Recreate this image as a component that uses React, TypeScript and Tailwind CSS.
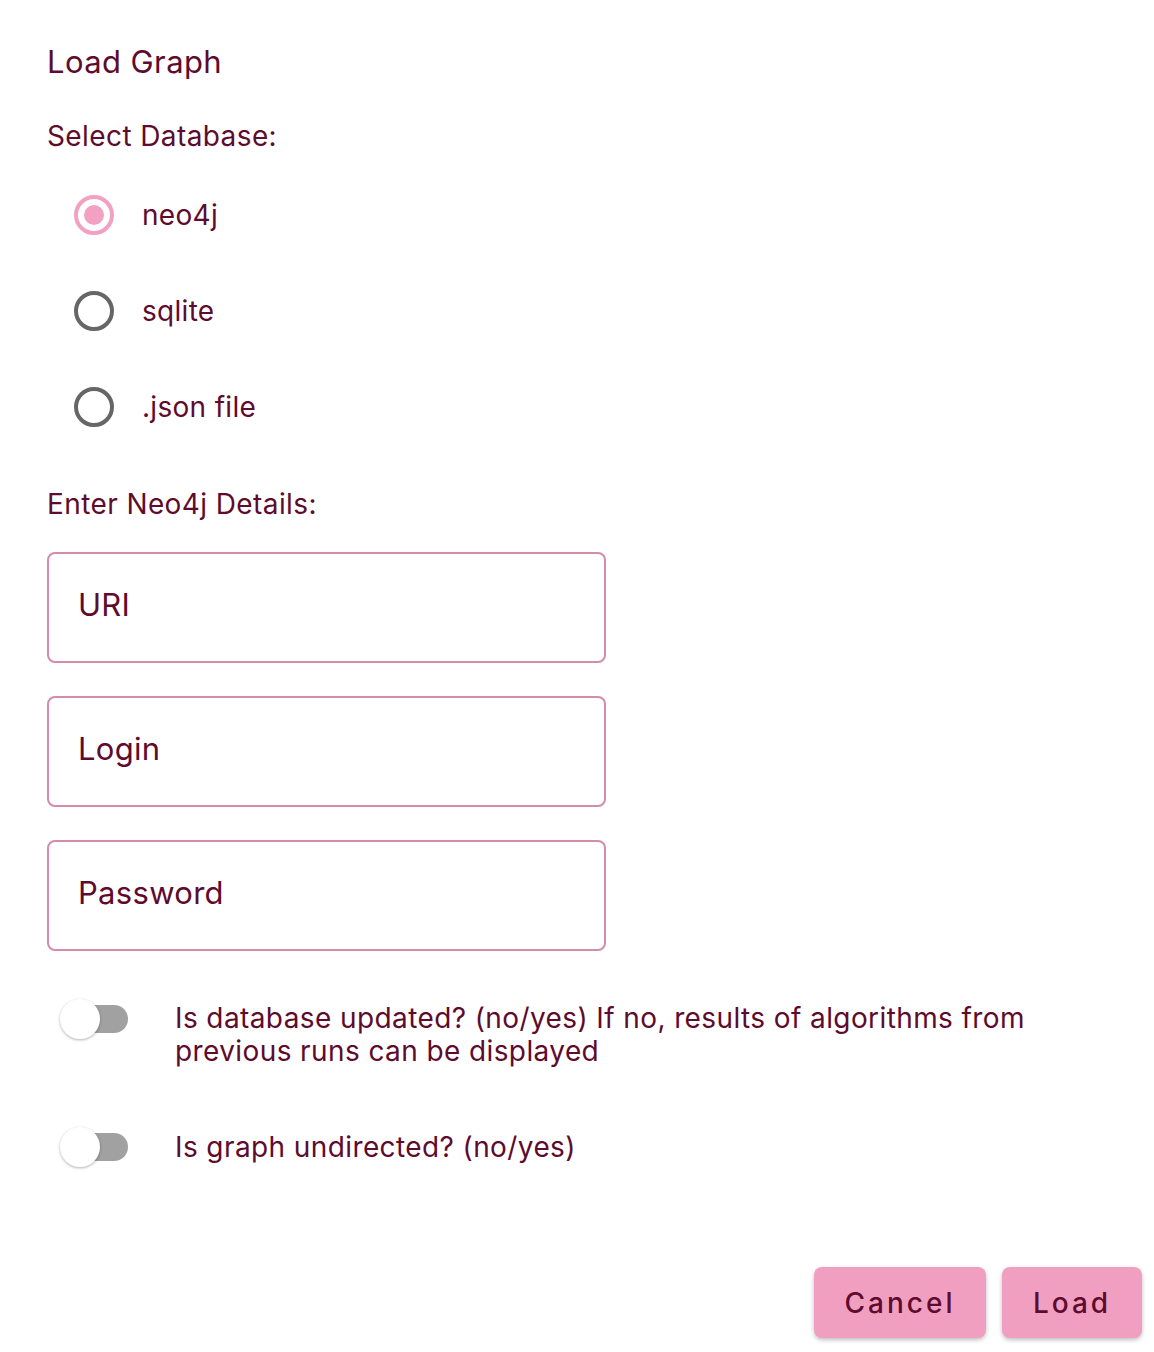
import React, { useState } from 'react';

const ink = 'text-[#5e0b2d]';

const Radio: React.FC<{ checked: boolean; label: string; onClick: () => void }> = ({ checked, label, onClick }) => (
  <button onClick={onClick} className="flex items-center h-[96px] text-left">
    <span className="ml-[27px] w-[40px] h-[40px] flex">
      {checked ? (
        <span className="w-[40px] h-[40px] rounded-full border-[4px] border-[#f3a1c2] flex items-center justify-center">
          <span className="w-[20px] h-[20px] rounded-full bg-[#f3a1c2]" />
        </span>
      ) : (
        <span className="w-[40px] h-[40px] rounded-full border-[4px] border-[#666666]" />
      )}
    </span>
    <span className={`ml-[28px] text-[28px] tracking-[0.3px] ${ink}`}>{label}</span>
  </button>
);

const Field: React.FC<{ label: string }> = ({ label }) => (
  <div className="w-[559px] h-[111px] rounded-[8px] border-2 border-[#d58bab] flex items-center pl-[29px] pb-[5px]">
    <span className={`text-[31px] tracking-[0.3px] ${ink}`}>{label}</span>
  </div>
);

const Toggle: React.FC<{ on: boolean; onClick: () => void }> = ({ on, onClick }) => (
  <button onClick={onClick} className="relative w-[128px] h-[40px] shrink-0">
    <span className="absolute left-[62px] top-[6px] w-[66px] h-[28px] rounded-full bg-[#a1a1a1]" />
    <span
      className={`absolute top-0 w-[40px] h-[40px] rounded-full bg-white shadow-[0_1px_3px_rgba(0,0,0,0.3)] ${on ? 'left-[88px]' : 'left-[60px]'}`}
    />
  </button>
);

export default function App() {
  const [db, setDb] = useState('neo4j');
  const [updated, setUpdated] = useState(false);
  const [undirected, setUndirected] = useState(false);

  return (
    <div className="w-[1154px] h-[1352px] bg-white font-['Inter',sans-serif] flex flex-col">
      <div className="pl-[47px] flex flex-col">
        <h1 className={`mt-[42px] text-[31px] leading-[40px] tracking-[0.4px] ${ink}`}>Load Graph</h1>

        <div className={`mt-[38px] text-[28px] leading-[32px] tracking-[0.4px] ${ink}`}>Select Database:</div>

        <div className="mt-[15px] flex flex-col">
          {['neo4j', 'sqlite', '.json file'].map((d) => (
            <Radio key={d} label={d} checked={db === d} onClick={() => setDb(d)} />
          ))}
        </div>

        <div className={`mt-[33px] text-[28px] leading-[32px] tracking-[0.4px] ${ink}`}>Enter Neo4j Details:</div>

        <div className="mt-[32px] flex flex-col gap-[33px]">
          <Field label="URI" />
          <Field label="Login" />
          <Field label="Password" />
        </div>
      </div>

      <div className="mt-[48px] flex flex-col">
        <div className="flex items-start">
          <Toggle on={updated} onClick={() => setUpdated(!updated)} />
          <p className={`ml-[47px] mt-[3px] w-[900px] text-[28px] leading-[33px] tracking-[0.4px] ${ink}`}>
            Is database updated? (no/yes) If no, results of algorithms from previous runs can be displayed
          </p>
        </div>
        <div className="mt-[59px] flex items-center">
          <Toggle on={undirected} onClick={() => setUndirected(!undirected)} />
          <p className={`ml-[47px] text-[28px] leading-[33px] tracking-[0.4px] ${ink}`}>Is graph undirected? (no/yes)</p>
        </div>
      </div>

      <div className="mt-auto mb-[14px] mr-[12px] flex justify-end gap-[16px]">
        <button className={`w-[172px] h-[71px] rounded-[8px] bg-[#f19fc1] shadow-[0_2px_4px_rgba(0,0,0,0.25)] text-[28px] font-medium tracking-[3px] ${ink}`}>
          Cancel
        </button>
        <button className={`w-[140px] h-[71px] rounded-[8px] bg-[#f19fc1] shadow-[0_2px_4px_rgba(0,0,0,0.25)] text-[28px] font-medium tracking-[3px] ${ink}`}>
          Load
        </button>
      </div>
    </div>
  );
}
